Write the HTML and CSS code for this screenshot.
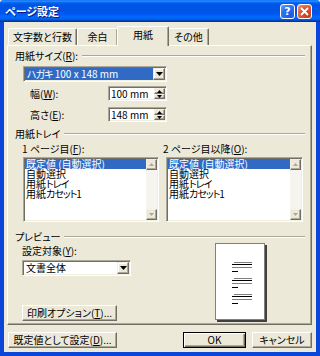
FILE: index.html
```html
<!DOCTYPE html>
<html lang="ja">
<head>
  <meta charset="UTF-8" />
  <title>ページ設定</title>
  <link rel="stylesheet" href="styles.css">
</head>
<body>
  <div class="window">
    <div class="titlebar">
      <span class="title">ページ設定</span>
      <div class="caption">
        <span class="cap-btn help">?</span>
        <span class="cap-btn close">
          <svg width="9" height="9" viewBox="0 0 9 9"><path d="M1 1L8 8M8 1L1 8" stroke="#fff" stroke-width="1.8"/></svg>
        </span>
      </div>
    </div>

    <div class="client">
      <div class="tabs">
        <div class="tab t1">文字数と行数</div>
        <div class="tab t2">余白</div>
        <div class="tab t3 active">用紙</div>
        <div class="tab t4">その他</div>
      </div>

      <div class="panel">
        <div class="group-title"><span>用紙サイズ(<u>R</u>):</span><i class="rule"></i></div>
        <div class="combo combo-size">
          <span class="combo-text sel"><span class="kana">ハガキ</span> 100 x 148 mm</span>
          <span class="drop"><svg width="7" height="4" viewBox="0 0 7 4"><path d="M0 0H7L3.5 4Z"/></svg></span>
        </div>
        <div class="size-row first">
          <span class="size-label">幅(<u>W</u>):</span>
          <div class="spin">
            <span class="spin-text">100 mm</span>
            <span class="spin-btns">
              <b><svg width="5" height="3" viewBox="0 0 5 3"><path d="M2.5 0L5 3H0Z"/></svg></b>
              <b><svg width="5" height="3" viewBox="0 0 5 3"><path d="M0 0H5L2.5 3Z"/></svg></b>
            </span>
          </div>
        </div>
        <div class="size-row">
          <span class="size-label">高さ(<u>E</u>):</span>
          <div class="spin">
            <span class="spin-text">148 mm</span>
            <span class="spin-btns">
              <b><svg width="5" height="3" viewBox="0 0 5 3"><path d="M2.5 0L5 3H0Z"/></svg></b>
              <b><svg width="5" height="3" viewBox="0 0 5 3"><path d="M0 0H5L2.5 3Z"/></svg></b>
            </span>
          </div>
        </div>

        <div class="group-title tray-title"><span>用紙トレイ</span><i class="rule"></i></div>
        <div class="trays">
          <div class="tray-col col1">
            <span class="tray-label">1 ページ目(<u>F</u>):</span>
            <div class="list">
              <div class="items">
                <div class="item sel">既定値 (自動選択)</div>
                <div class="item">自動選択</div>
                <div class="item">用紙<span class="kana">トレイ</span></div>
                <div class="item">用紙<span class="kana">カセット</span>1</div>
              </div>
              <div class="vscroll">
                <span class="arrow"><svg width="5" height="3" viewBox="0 0 5 3"><path d="M2.5 0L5 3H0Z"/></svg></span>
                <span class="track"></span>
                <span class="arrow"><svg width="5" height="3" viewBox="0 0 5 3"><path d="M0 0H5L2.5 3Z"/></svg></span>
              </div>
            </div>
          </div>
          <div class="tray-col col2">
            <span class="tray-label">2 ページ目以降(<u>O</u>):</span>
            <div class="list">
              <div class="items">
                <div class="item sel">既定値 (自動選択)</div>
                <div class="item">自動選択</div>
                <div class="item">用紙<span class="kana">トレイ</span></div>
                <div class="item">用紙<span class="kana">カセット</span>1</div>
              </div>
              <div class="vscroll">
                <span class="arrow"><svg width="5" height="3" viewBox="0 0 5 3"><path d="M2.5 0L5 3H0Z"/></svg></span>
                <span class="track"></span>
                <span class="arrow"><svg width="5" height="3" viewBox="0 0 5 3"><path d="M0 0H5L2.5 3Z"/></svg></span>
              </div>
            </div>
          </div>
        </div>

        <div class="group-title preview-title"><span>プレビュー</span><i class="rule"></i></div>
        <div class="preview-row">
          <div class="preview-left">
            <span class="target-label">設定対象(<u>Y</u>):</span>
            <div class="combo combo-target">
              <span class="combo-text">文書全体</span>
              <span class="drop"><svg width="7" height="4" viewBox="0 0 7 4"><path d="M0 0H7L3.5 4Z"/></svg></span>
            </div>
            <div class="btn print-btn">印刷オプション(<u>T</u>)...</div>
          </div>
          <div class="page">
            <svg width="48" height="75" viewBox="0 0 48 75">
              <rect x="18" y="18" width="18" height="1" fill="#808080"/>
              <rect x="16" y="20" width="20" height="1" fill="#000"/>
              <rect x="16" y="23" width="20" height="1" fill="#808080"/>
              <rect x="16" y="27" width="6" height="1" fill="#000"/>
              <rect x="18" y="34" width="18" height="1" fill="#808080"/>
              <rect x="16" y="36" width="20" height="1" fill="#000"/>
              <rect x="16" y="39" width="20" height="1" fill="#808080"/>
              <rect x="16" y="43" width="6" height="1" fill="#000"/>
              <rect x="18" y="50" width="18" height="1" fill="#808080"/>
              <rect x="16" y="52" width="20" height="1" fill="#000"/>
              <rect x="16" y="55" width="20" height="1" fill="#808080"/>
              <rect x="16" y="59" width="6" height="1" fill="#000"/>
            </svg>
          </div>
        </div>
      </div>

      <div class="footer">
        <div class="btn default-btn">既定値として設定(<u>D</u>)...</div>
        <div class="btn ok-btn">OK</div>
        <div class="btn cancel-btn">キャンセル</div>
      </div>
    </div>
  </div>
</body>
</html>
```

FILE: styles.css
```css
* {
  box-sizing: border-box;
}
body {
  margin: 0;
  background: #fff;
  font-family: "Noto Sans CJK JP", "Noto Sans", sans-serif;
  font-size: 10px;
  line-height: 12px;
  color: #000;
  font-feature-settings: "palt";
}
u {
  text-underline-offset: 1px;
}
.kana {
  letter-spacing: -1px;
}
.window {
  width: 320px;
  height: 356px;
  display: flex;
  flex-direction: column;
}

/* title bar */
.titlebar {
  height: 22px;
  display: flex;
  align-items: center;
  padding: 0 8px 0 5px;
  border-radius: 3px 3px 0 0;
  background: linear-gradient(#0058ee 0%, #3593ff 4%, #288eff 6%, #127dff 8%, #036ffc 10%, #0262ee 14%, #0057e5 20%, #0054e3 24%, #0055eb 56%, #005bf5 66%, #026afe 76%, #0062ef 86%, #0052d6 92%, #0040ab 94%, #003092 100%);
}
.title {
  flex: 1;
  color: #fff;
  font-weight: bold;
  font-size: 11px;
  text-shadow: 1px 1px #0a1883;
}
.caption {
  display: flex;
  gap: 2px;
}
.cap-btn {
  width: 15px;
  height: 15px;
  border: 1px solid #fff;
  border-radius: 3px;
  display: flex;
  align-items: center;
  justify-content: center;
  color: #fff;
  font: bold 11px "DejaVu Sans", sans-serif;
}
.help {
  background: radial-gradient(circle at 75% 80%, #1c5ae6, #2b6ff0 55%, #6fa2fa);
}
.close {
  background: radial-gradient(circle at 75% 80%, #c2401f, #e0552f 55%, #f4a184);
}

/* client area */
.client {
  flex: 1;
  display: flex;
  flex-direction: column;
  background: #ece9d8;
  border: 4px solid #0a46da;
  border-top: 0;
  padding: 4px 4px 0 3px;
}
.tabs {
  display: flex;
  align-items: flex-end;
  height: 19px;
  margin-left: 1px;
}
.tab {
  height: 17px;
  display: flex;
  align-items: center;
  justify-content: center;
  border: 1px solid;
  border-bottom: 0;
  border-color: #fff #716f64 transparent #fff;
  border-radius: 2px 2px 0 0;
  box-shadow: inset -1px 0 #aca899;
}
.t1 { width: 69px; }
.t2 { width: 41px; }
.t3 { width: 52px; }
.t4 { width: 41px; }
.tab.active {
  height: 20px;
  margin: 0 -1px -1px;
  padding-bottom: 3px;
  position: relative;
  z-index: 1;
  background: #ece9d8;
}

.panel {
  height: 280px;
  display: flex;
  flex-direction: column;
  border: 1px solid;
  border-color: #fff #716f64 #716f64 #fff;
  box-shadow: inset -1px -1px #aca899;
  padding: 4px 6px 0 7px;
}
.group-title {
  display: flex;
  align-items: center;
  gap: 4px;
  height: 12px;
}
.rule {
  flex: 1;
  height: 2px;
  border-top: 1px solid #aca899;
  border-bottom: 1px solid #fff;
}
.tray-title { margin-top: 6px; }
.preview-title { margin-top: 9px; }

/* sunken fields */
.combo, .spin, .list {
  background: #fff;
  border: 1px solid;
  border-color: #aca899 #fff #fff #aca899;
  box-shadow: inset 1px 1px #716f64, inset -1px -1px #f1efe2;
  padding: 1px;
  display: flex;
}
.combo {
  height: 16px;
}
.combo-size {
  width: 144px;
  margin: 4px 0 0 8px;
}
.combo-text {
  flex: 1;
  line-height: 12px;
  padding-left: 2px;
  white-space: nowrap;
}
.combo-text.sel {
  background: #316ac5;
  color: #fff;
}
.drop {
  width: 12px;
  display: flex;
  align-items: center;
  justify-content: center;
  background: #ece9d8;
  border: 1px solid;
  border-color: #f1efe2 #716f64 #716f64 #f1efe2;
  box-shadow: inset -1px -1px #aca899, inset 1px 1px #fff;
}

.size-row {
  display: flex;
  align-items: center;
  margin: 6px 0 0 15px;
}
.size-row.first {
  margin-top: 4px;
}
.size-label {
  width: 78px;
}
.spin {
  width: 59px;
  height: 15px;
}
.spin-text {
  flex: 1;
  line-height: 11px;
  padding-left: 1px;
}
.spin-btns {
  width: 11px;
  display: flex;
  flex-direction: column;
}
.spin-btns b, .arrow {
  display: flex;
  align-items: center;
  justify-content: center;
  background: #ece9d8;
  border: 1px solid;
  border-color: #f1efe2 #716f64 #716f64 #f1efe2;
  box-shadow: inset -1px -1px #aca899;
}
.spin-btns b {
  height: 6px;
}
.spin-btns b + b {
  height: 5px;
}

/* trays */
.trays {
  display: flex;
  margin-top: 3px;
}
.tray-col {
  display: flex;
  flex-direction: column;
}
.col1 {
  width: 137px;
  margin-left: 7px;
}
.col2 {
  width: 140px;
  margin-left: 4px;
}
.tray-label {
  height: 12px;
}
.list {
  height: 65px;
  margin-top: 2px;
}
.col1 .list {
  margin-left: 1px;
}
.col2 .list {
  margin-left: 3px;
}
.items {
  flex: 1;
}
.item {
  height: 10px;
  line-height: 10px;
  padding-left: 1px;
  white-space: nowrap;
}
.item.sel {
  background: #316ac5;
  color: #fff;
}
.vscroll {
  width: 11px;
  display: flex;
  flex-direction: column;
  background: #f5f4ef;
}
.arrow {
  height: 11px;
}
.arrow path {
  fill: #aca899;
}
.track {
  flex: 1;
}

/* preview */
.preview-row {
  display: flex;
}
.preview-left {
  width: 109px;
  margin-left: 7px;
  display: flex;
  flex-direction: column;
}
.target-label {
  margin-top: 2px;
  height: 12px;
}
.combo-target {
  margin-top: 3px;
}
.print-btn {
  width: 95px;
  margin-top: 29px;
}
.page {
  width: 50px;
  height: 77px;
  margin-left: 84px;
  border: 1px solid #808080;
  background: #fff;
  box-shadow: 2px 2px #404040;
}
.page svg {
  display: block;
}

/* buttons */
.btn {
  height: 16px;
  display: flex;
  align-items: center;
  justify-content: center;
  background: #ece9d8;
  border: 1px solid;
  border-color: #fff #716f64 #716f64 #fff;
  box-shadow: inset -1px -1px #aca899;
  white-space: nowrap;
}
.footer {
  display: flex;
  margin-top: 7px;
}
.default-btn {
  width: 109px;
  margin-left: 1px;
}
.ok-btn {
  width: 63px;
  margin-left: auto;
  border-color: #000;
  box-shadow: inset 1px 1px #fff, inset -1px -1px #716f64, inset -2px -2px #aca899;
}
.cancel-btn {
  width: 60px;
  margin-left: 6px;
}
```
